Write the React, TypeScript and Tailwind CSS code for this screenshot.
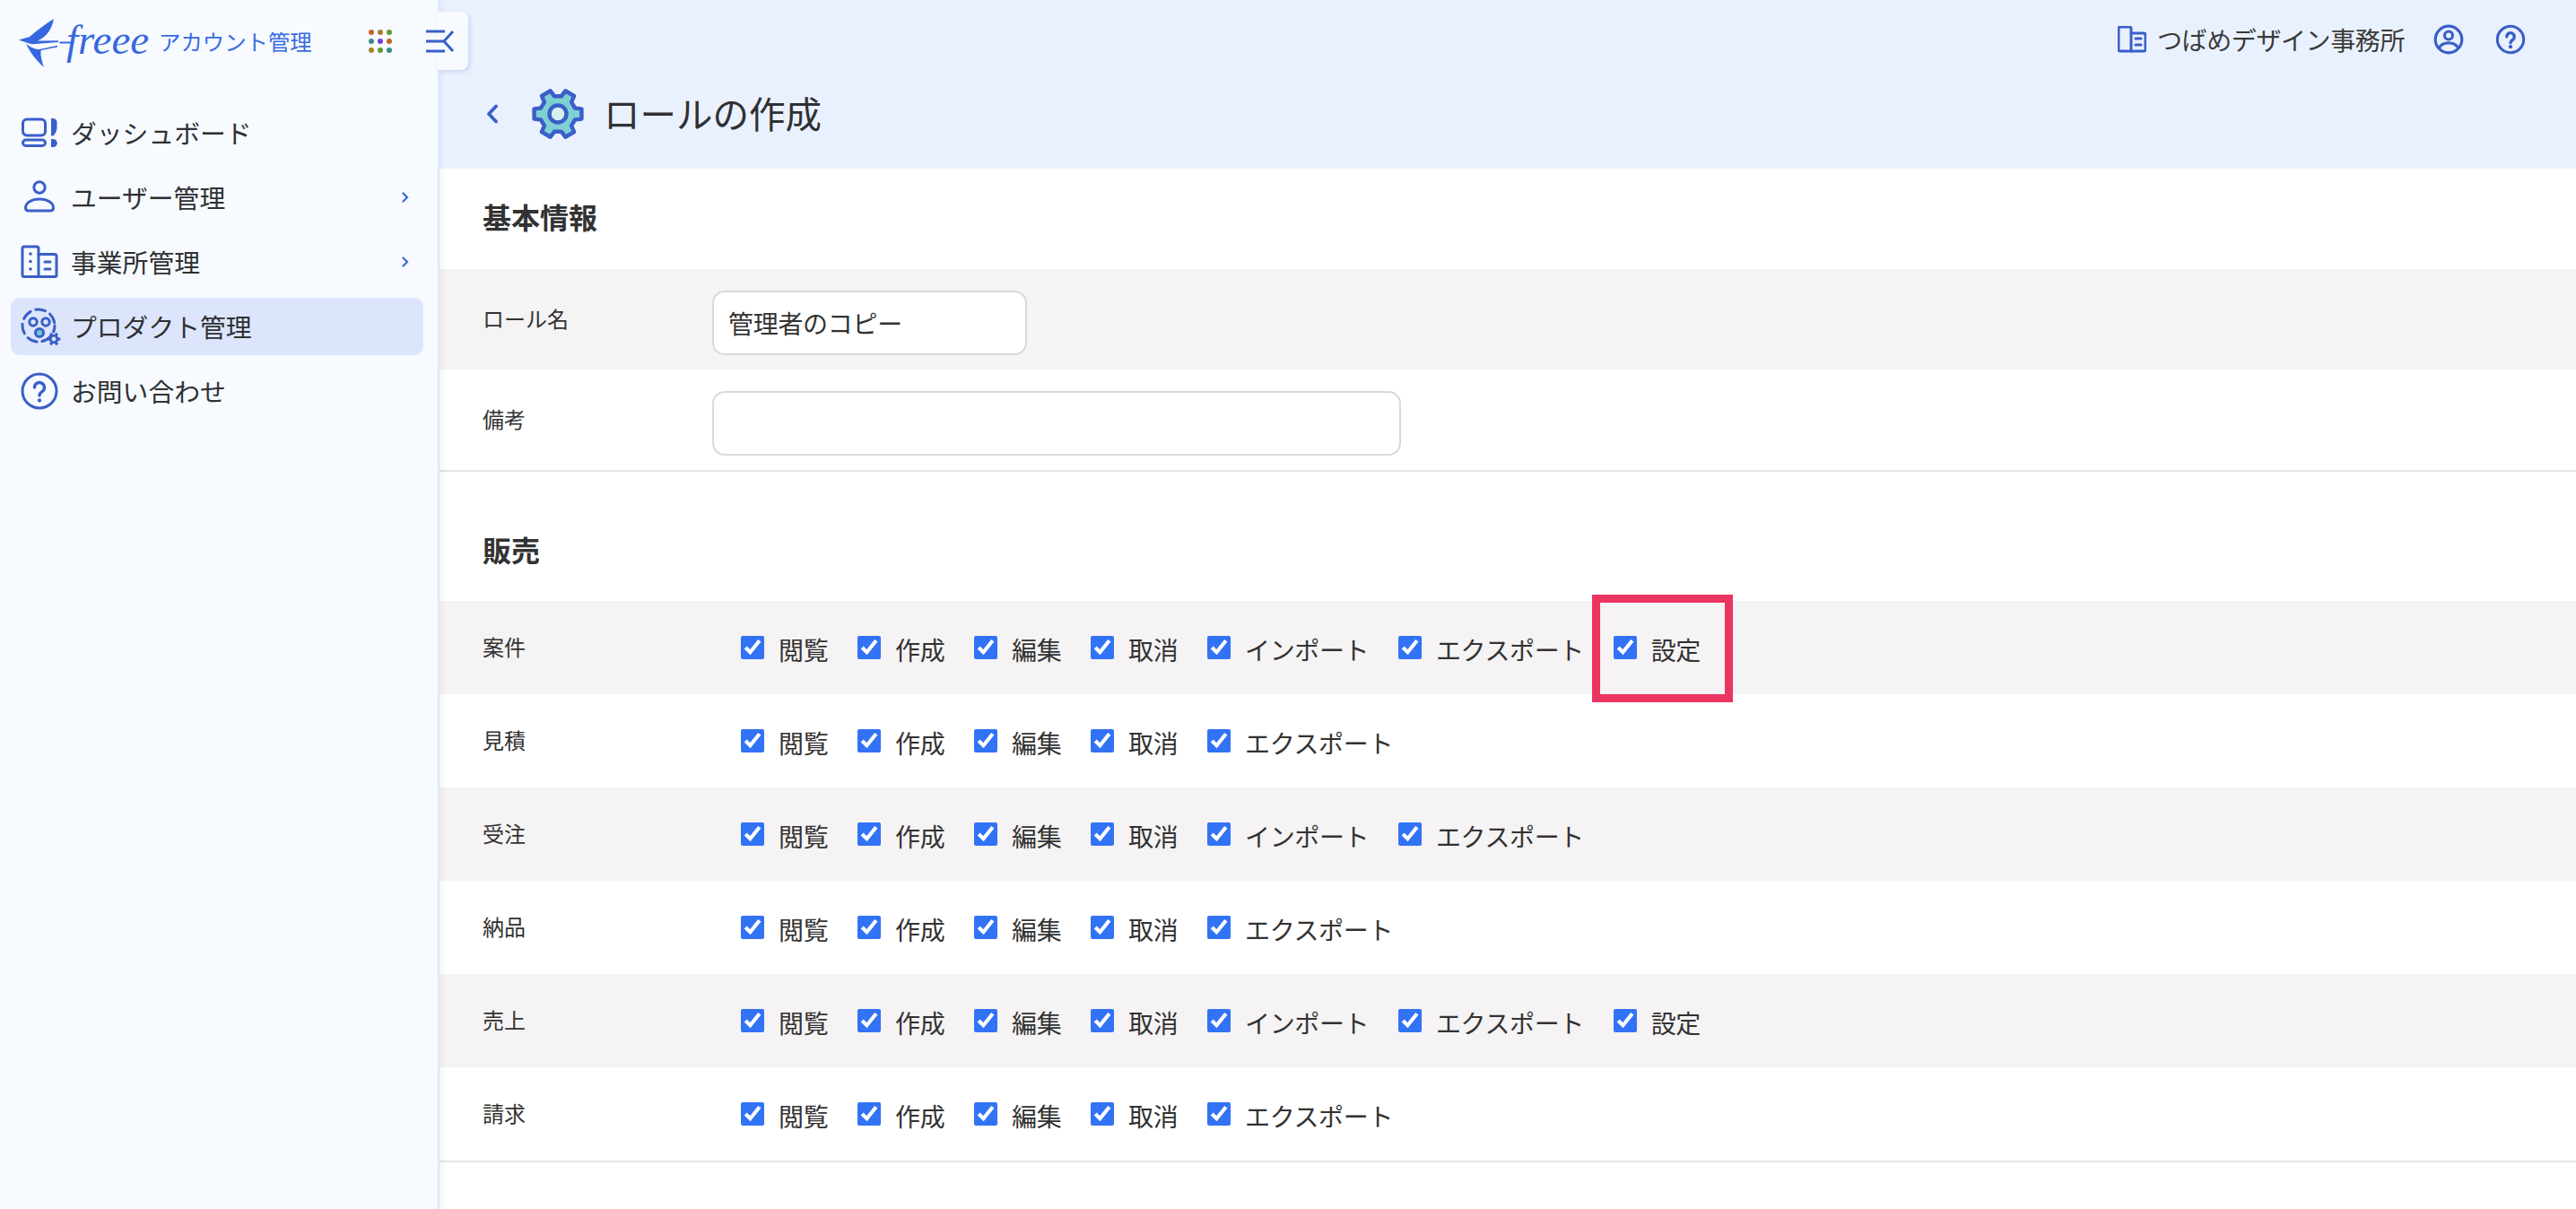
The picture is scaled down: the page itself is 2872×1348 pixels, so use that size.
import React from "react";

const BLUE = "#3a5fc8";

function gearPath(cx: number, cy: number, ro: number, ri: number) {
  const pts: string[] = [];
  for (let i = 0; i < 6; i++) {
    const a = (i * 60 * Math.PI) / 180;
    const list: [number, number][] = [
      [ri, -19],
      [ro, -12],
      [ro, 12],
      [ri, 19],
    ];
    for (const [r, d] of list) {
      const t = a + (d * Math.PI) / 180;
      pts.push(`${(cx + r * Math.cos(t)).toFixed(2)} ${(cy + r * Math.sin(t)).toFixed(2)}`);
    }
  }
  return "M" + pts.join("L") + "Z";
}

function IconDashboard() {
  return (
    <svg width="44" height="44" viewBox="0 0 44 44" fill="none" stroke={BLUE} strokeWidth="3">
      <rect x="3.500" y="7" width="25" height="18" rx="4.500" />
      <rect x="3.500" y="30" width="25" height="6.500" rx="3.200" />
      <path d="M35 6h2c2.500 0 4.500 1.800 4.500 4v6c0 3.500-2 8-4.500 9.500h-2z" fill={BLUE} stroke="none" />
      <path d="M35 29h2c2.800 0 4.800 2 4.800 4.500S39.800 38 37 38h-2z" fill={BLUE} stroke="none" />
    </svg>
  );
}
function IconUser() {
  return (
    <svg width="44" height="44" viewBox="0 0 44 44" fill="none" stroke={BLUE} strokeWidth="3">
      <circle cx="22" cy="11" r="6.200" />
      <path d="M10 37h24c2.200 0 3.500-1.200 3.500-3.200 0-5.800-6.600-9.800-15.500-9.800S6.500 28 6.500 33.800c0 2 1.300 3.200 3.500 3.200z" />
    </svg>
  );
}
function IconBuilding() {
  return (
    <svg width="44" height="44" viewBox="0 0 44 44" fill="none" stroke={BLUE} strokeWidth="3" strokeLinecap="round">
      <path d="M21 38.500H5a2 2 0 0 1-2-2V7a2 2 0 0 1 2-2h14a2 2 0 0 1 2 2z" />
      <path d="M21 13.500h18a2 2 0 0 1 2 2v21a2 2 0 0 1-2 2H21" />
      <path d="M28 22h6M28 30h6" />
      <circle cx="12" cy="13" r="1.800" fill={BLUE} stroke="none" />
      <circle cx="12" cy="21.500" r="1.800" fill={BLUE} stroke="none" />
      <circle cx="12" cy="30" r="1.800" fill={BLUE} stroke="none" />
    </svg>
  );
}
function IconProduct() {
  return (
    <svg width="48" height="46" viewBox="0 0 48 46" fill="none" stroke={BLUE} strokeWidth="3" className="overflow-visible">
      <circle cx="21" cy="21" r="18" strokeDasharray="11 6" strokeDashoffset="4" strokeLinecap="round" />
      <circle cx="15" cy="17" r="4.200" />
      <circle cx="29" cy="17" r="4.200" />
      <circle cx="22" cy="29" r="4.600" fill="#6fc7cc" />
      <path d={gearPath(38, 36, 7.500, 5.200)} fill={BLUE} stroke="none" />
      <circle cx="38" cy="36" r="2.400" fill="#dce5fb" stroke="none" />
    </svg>
  );
}
function IconHelp({ size = 44, sw = 3 }: { size?: number; sw?: number }) {
  return (
    <svg width={size} height={size} viewBox="0 0 44 44" fill="none" stroke={BLUE} strokeWidth={sw} strokeLinecap="round">
      <circle cx="22" cy="22" r="19" />
      <path d="M16.500 18a5.500 5.500 0 1 1 8.500 4.600c-2 1.300-3 2.400-3 4.400" strokeWidth={sw + 0.4} />
      <circle cx="22" cy="32.500" r={sw / 1.4} fill={BLUE} stroke="none" />
    </svg>
  );
}
function Chevron() {
  return (
    <svg width="8" height="12" viewBox="0 0 8 12" fill="none" stroke="#3f67d6" strokeWidth="2.200" strokeLinecap="round">
      <path d="M1.500 1.500L6 6l-4.500 4.500" />
    </svg>
  );
}

function Bird() {
  return (
    <svg width="60" height="60" viewBox="20 16 60 60" className="shrink-0">
      <path d="M21 44.500C26 43 30 42 33 41C42 33 52 26 60 21C58 32 52 41 42 45.500L65 45.200V47L36 49.200C30 48 26 46 21 44.500Z" fill="#3568e0" />
      <path d="M29 48.500C34 53 40 55.500 44 55L64 50.800V52.400L46 56C44.500 57 46 67 49 75C41 68 33 58 29 48.500Z" fill="#3568e0" />
      <path d="M67 47.500H79" stroke="#3568e0" strokeWidth="1.800" strokeLinecap="round" fill="none" />
    </svg>
  );
}

const DOTS = ["#c8622c", "#a8802c", "#5f9a35", "#3a8c8c", "#7040d8", "#c8622c", "#a8802c", "#5f9a35", "#3a8c8c"];

function Dots() {
  return (
    <div className="grid grid-cols-3 gap-x-[4px] gap-y-[4px] w-[26px]">
      {DOTS.map((c, i) => (
        <span key={i} className="w-[6px] h-[6px] rounded-full" style={{ backgroundColor: c }} />
      ))}
    </div>
  );
}

function MenuItem({ icon, label, active, arrow }: { icon: React.ReactNode; label: string; active?: boolean; arrow?: boolean }) {
  return (
    <div className={`h-[64px] flex items-center pl-[10px] pr-[16px] rounded-[10px] ${active ? "bg-[#dce5fb]" : ""}`}>
      <span className="w-[44px] h-[44px] mr-[13px] shrink-0 flex">{icon}</span>
      <span className="flex-1 text-[28.8px] -mt-[1px] text-[#2f3033]">{label}</span>
      {arrow && <Chevron />}
    </div>
  );
}

function Check({ label }: { label: string }) {
  return (
    <label className="flex items-center mr-[32.7px]">
      <input type="checkbox" defaultChecked className="w-[26px] h-[26px] m-0 mr-[16px] accent-[#3273f6] shrink-0" />
      <span className="text-[28px] leading-[40px] pt-[3px] tracking-[-0.35px] text-[#323232]">{label}</span>
    </label>
  );
}

const BASE = ["閲覧", "作成", "編集", "取消"];
const ROWS: { name: string; items: string[]; highlight?: boolean }[] = [
  { name: "案件", items: [...BASE, "インポート", "エクスポート", "設定"], highlight: true },
  { name: "見積", items: [...BASE, "エクスポート"] },
  { name: "受注", items: [...BASE, "インポート", "エクスポート"] },
  { name: "納品", items: [...BASE, "エクスポート"] },
  { name: "売上", items: [...BASE, "インポート", "エクスポート", "設定"] },
  { name: "請求", items: [...BASE, "エクスポート"] },
];

export default function App() {
  return (
    <div className="flex h-screen w-full overflow-hidden bg-white font-['Noto_Sans_CJK_JP','Noto_Sans',sans-serif] text-[#323232]">
      <aside className="relative w-[490px] shrink-0 bg-[#f7faff] border-r-2 border-[#dfe7fb] shadow-[2px_0_6px_rgba(60,90,180,0.08)] z-10">
        <div className="h-[92px] flex items-center pl-[20px]">
          <Bird />
          <span className="font-['Liberation_Serif',serif] italic text-[47px] leading-none text-[#3568e0] w-[103px] -ml-[6px] -mt-[4px]">freee</span>
          <span className="text-[24.4px] text-[#3a6be0] w-[234px]">アカウント管理</span>
          <Dots />
        </div>
        <div className="absolute left-[488px] top-[13px] w-[34px] h-[65px] bg-[#f7faff] rounded-r-[8px] shadow-[2px_2px_5px_rgba(60,90,180,0.18)]" />
        <svg width="34" height="30" viewBox="0 0 34 30" fill="none" stroke={BLUE} strokeWidth="3" className="absolute left-[474px] top-[31px]">
          <path d="M1 4h21M1 15h21M1 26h21" />
          <path d="M31 4L21 15l10 11" strokeWidth="3" />
        </svg>
        <nav className="mt-[24px] mx-[12px] w-[460px] flex flex-col gap-[8px]">
          <MenuItem icon={<IconDashboard />} label="ダッシュボード" />
          <MenuItem icon={<IconUser />} label="ユーザー管理" arrow />
          <MenuItem icon={<IconBuilding />} label="事業所管理" arrow />
          <MenuItem icon={<IconProduct />} label="プロダクト管理" active />
          <MenuItem icon={<IconHelp />} label="お問い合わせ" />
        </nav>
      </aside>

      <main className="flex-1 min-w-0">
        <header className="h-[188px] bg-[#eaf1fe] flex flex-col">
          <div className="h-[88px] flex items-center justify-end pr-[56px]">
            <svg width="32" height="30" viewBox="0 0 32 30" fill="none" stroke={BLUE} strokeWidth="3" strokeLinecap="round">
              <path d="M15 28H3a2 2 0 0 1-2-2V3a2 2 0 0 1 2-2h10a2 2 0 0 1 2 2z" />
              <path d="M15 8h14a2 2 0 0 1 2 2v16a2 2 0 0 1-2 2H15" />
              <path d="M20 14h6M20 21h6" strokeWidth="3" />
            </svg>
            <span className="ml-[12px] mr-[32px] text-[28px] tracking-[-0.4px] text-[#3a3a3a]">つばめデザイン事務所</span>
            <svg width="34" height="34" viewBox="0 0 34 34" fill="none" stroke={BLUE} strokeWidth="3.200">
              <circle cx="17" cy="17" r="14.800" />
              <circle cx="17" cy="12.500" r="4.500" />
              <path d="M6 27C8 22.800 12 20.800 17 20.800s9 2 11 6.200" />
            </svg>
            <span className="ml-[35px] flex">
              <IconHelp size={34} sw={4} />
            </span>
          </div>
          <div className="flex-1 flex items-center pl-[52px] pb-[22px]">
            <svg width="14" height="22" viewBox="0 0 14 22" fill="none" stroke={BLUE} strokeWidth="3.800" strokeLinecap="round" strokeLinejoin="round">
              <path d="M11 2.500L3 11l8 8.500" />
            </svg>
            <svg width="62" height="60" viewBox="0 0 62 60" className="ml-[35px] shrink-0">
              <path d={gearPath(31, 30, 27, 20)} fill="#7fd0d2" stroke={BLUE} strokeWidth="4.500" strokeLinejoin="round" />
              <circle cx="31" cy="30" r="9.500" fill="#d6f0ee" stroke={BLUE} strokeWidth="4.500" />
            </svg>
            <h1 className="ml-[20px] -mt-[2px] text-[40.5px] font-normal text-[#2f3033]">ロールの作成</h1>
          </div>
        </header>

        <section>
          <div className="h-[112px] flex items-center pl-[48px] pb-[6px]">
            <h2 className="text-[32px] font-bold text-[#323232]">基本情報</h2>
          </div>
          <div className="h-[112px] bg-[#f5f3f4] flex">
            <div className="w-[304px] pl-[48px] pb-[2px] flex items-center text-[24px] text-[#323232]">ロール名</div>
            <div className="pt-[24px]">
              <input
                defaultValue="管理者のコピー"
                className="w-[351px] h-[72px] px-[16px] bg-white border-2 border-[#d9d9d9] rounded-[14px] text-[28px] tracking-[-0.3px] text-[#323232] outline-none"
              />
            </div>
          </div>
          <div className="h-[114px] flex border-b-2 border-[#e4e4e4]">
            <div className="w-[304px] pl-[48px] pb-[2px] flex items-center text-[24px] text-[#323232]">備考</div>
            <div className="pt-[24px]">
              <input className="w-[768px] h-[72px] px-[16px] bg-white border-2 border-[#d9d9d9] rounded-[14px] text-[28px] outline-none" />
            </div>
          </div>
        </section>

        <section>
          <div className="h-[144px] flex items-center pl-[48px] pt-[28px]">
            <h2 className="text-[32px] font-bold text-[#323232]">販売</h2>
          </div>
          <div className="border-b-2 border-[#e4e4e4]">
            {ROWS.map((r, i) => (
              <div key={r.name} className={`relative h-[104px] flex items-center ${i % 2 === 0 ? "bg-[#f5f3f4]" : "bg-white"}`}>
                <div className="w-[336px] pl-[48px] text-[24px] text-[#323232] -mt-[2px]">{r.name}</div>
                {r.items.map((it) => (
                  <Check key={it} label={it} />
                ))}
                {r.highlight && (
                  <div className="absolute z-10 left-[1285px] top-[-7px] w-[157px] h-[120px] border-[9px] border-[#eb3561]" />
                )}
              </div>
            ))}
          </div>
        </section>
      </main>
    </div>
  );
}
